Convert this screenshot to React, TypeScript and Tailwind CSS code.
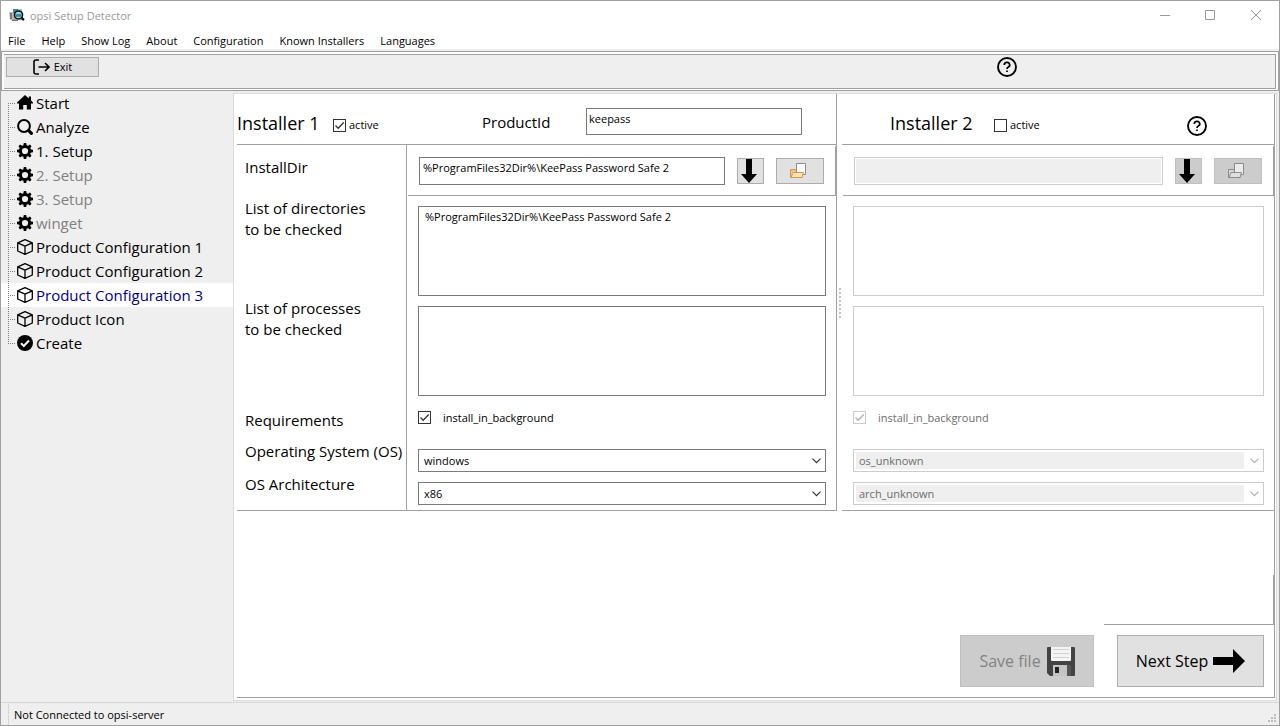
import { useState } from 'react'
import type { ReactNode } from 'react'

const MENU = ['File', 'Help', 'Show Log', 'About', 'Configuration', 'Known Installers', 'Languages']

type IconName = 'home' | 'search' | 'gear' | 'box' | 'check'
interface NavItem { label: string; icon: IconName; muted?: boolean }

const NAV: NavItem[] = [
  { label: 'Start', icon: 'home' },
  { label: 'Analyze', icon: 'search' },
  { label: '1. Setup', icon: 'gear' },
  { label: '2. Setup', icon: 'gear', muted: true },
  { label: '3. Setup', icon: 'gear', muted: true },
  { label: 'winget', icon: 'gear', muted: true },
  { label: 'Product Configuration 1', icon: 'box' },
  { label: 'Product Configuration 2', icon: 'box' },
  { label: 'Product Configuration 3', icon: 'box' },
  { label: 'Product Icon', icon: 'box' },
  { label: 'Create', icon: 'check' },
]

function NavIcon({ name }: { name: IconName }) {
  const cls = 'w-4 h-4 shrink-0'
  if (name === 'home') return <svg className={cls} viewBox="0 0 16 16"><path d="M8 0 0 7.500v1h2v6h4.200V10h3.600v4.500H14v-6h2v-1l-2-2V1.500h-2.200v2z" /></svg>
  if (name === 'search') return <svg className={cls} viewBox="0 0 16 16"><circle cx="7" cy="7" r="5.900" fill="none" stroke="#000" strokeWidth="2" /><path d="m11.700 11.700 2.700 2.700" stroke="#000" strokeWidth="3.200" strokeLinecap="round" /></svg>
  if (name === 'gear') return (
    <svg className={cls} viewBox="0 0 16 16">
      <circle cx="8" cy="8" r="4.600" fill="none" stroke="#000" strokeWidth="3" />
      {[0, 45, 90, 135, 180, 225, 270, 315].map(a => <path key={a} d="M6.300 3 6.800 0h2.400l.5 3z" transform={`rotate(${a} 8 8)`} />)}
    </svg>
  )
  if (name === 'box') return <svg className={cls} viewBox="0 0 16 16" fill="none" stroke="#000" strokeWidth="1.300" strokeLinejoin="round"><path d="M8 .7 15.300 3.800v8.200L8 15.300.7 12V3.800zM.7 3.800 8 7.200l7.300-3.400M8 7.200v8" /></svg>
  return <svg className={cls} viewBox="0 0 16 16"><circle cx="8" cy="8" r="8" /><path d="m4 8.300 2.800 2.700L12 5.500" fill="none" stroke="#efefef" strokeWidth="2.200" /></svg>
}

function HelpButton() {
  return (
    <button aria-label="Help" className="block w-5 h-5 shrink-0">
      <svg viewBox="0 0 20 20" className="w-5 h-5" fill="none" stroke="#000">
        <circle cx="10" cy="10" r="9" strokeWidth="1.900" />
        <path d="M7.300 8a2.700 2.500 0 1 1 4 2.100c-.9.5-1.300.9-1.300 1.900" strokeWidth="1.700" />
        <path d="M10 13.500v1.500" strokeWidth="1.700" />
      </svg>
    </button>
  )
}

function AppLogo() {
  return (
    <svg width="16" height="16" viewBox="0 0 16 16">
      <path d="M0 4h6v8H1z" fill="#b9bcbc" /><path d="M1 5h2v6H1z" fill="#767c7d" />
      <path d="M4 1h9v4H4z" fill="#3d89a8" /><path d="M9 1h4v3H9z" fill="#8ccbd9" />
      <circle cx="9.500" cy="7" r="4" fill="#9fd6d3" stroke="#111" strokeWidth="1.600" />
      <path d="M7 7.500h5" stroke="#2786a8" strokeWidth="2.500" /><path d="m12.500 10 2.500 2" stroke="#111" strokeWidth="2.500" />
      <path d="M3 11.500h6v1.500H3z" fill="#777" />
    </svg>
  )
}

function DownArrow() {
  return <svg width="18" height="24" viewBox="0 0 18 24"><path d="M6 0h6v15h5l-8 9-8-9h5z" /></svg>
}

function FolderIcon({ disabled }: { disabled?: boolean }) {
  const edge = disabled ? '#8c8c8c' : '#dc9548'
  return (
    <svg width="16" height="16" viewBox="0 0 16 16" className="mr-1">
      <path d="M.5 14.500v-8h5l1 1.500H12v6.500z" fill={disabled ? '#d8d8d8' : '#f3c58e'} stroke={edge} />
      <path d="M6.500.5h9v11h-9z" fill={disabled ? '#ececec' : '#fafafa'} stroke="#8b8b8b" />
      <path d="M1 14.500 3 9.500h10.500l-1.500 5z" fill={disabled ? '#e0e0e0' : '#ffe2b8'} stroke={edge} />
    </svg>
  )
}

function FloppyIcon() {
  return (
    <svg width="28" height="29" viewBox="0 0 28 29">
      <path d="M0 1q0-1 1-1h26q1 0 1 1v27q0 1-1 1H3l-3-3z" fill="#434343" />
      <path d="M4 0h20v13q0 1-1 1H5q-1 0-1-1z" fill="#f4f4f4" />
      <path d="M6 2.500h16M6 6.500h16M6 10.500h16" stroke="#d2d2d2" />
      <path d="M6 18h18v11H6z" fill="#555" /><path d="M6 18h14v11H6z" fill="#c4c4c4" />
      <path d="M8 20h4v6H8z" fill="#222" />
    </svg>
  )
}

interface CheckProps { id: string; label: string; defaultChecked?: boolean; disabled?: boolean; wide?: boolean }

function CheckBox({ id, label, defaultChecked, disabled, wide }: CheckProps) {
  const [checked, setChecked] = useState(!!defaultChecked)
  return (
    <div className={`flex items-center ${wide ? 'gap-3' : 'gap-[3px]'}`}>
      <span className="relative flex w-[13px] h-[13px] shrink-0">
        <input id={id} type="checkbox" checked={checked} disabled={disabled} onChange={e => setChecked(e.target.checked)} className="appearance-none w-[13px] h-[13px] bg-white border border-[#333] disabled:border-[#ccc]" />
        {checked && <svg viewBox="0 0 13 13" className="absolute inset-0 pointer-events-none" fill="none" stroke={disabled ? '#b0b0b0' : '#333'} strokeWidth="1.300"><path d="m2.500 6.500 2.700 2.800L10.700 3.500" /></svg>}
      </span>
      <label htmlFor={id} className={`text-[11px] leading-4 ${disabled ? 'text-[#6d6d6d]' : ''}`}>{label}</label>
    </div>
  )
}

function Combo({ label, value, disabled }: { label: string; value: string; disabled?: boolean }) {
  return (
    <div className={`relative h-[23px] border bg-white ${disabled ? 'border-[#ccc]' : 'border-[#7a7a7a]'}`}>
      <select aria-label={label} disabled={disabled} className={`appearance-none block w-full h-[21px] text-[11px] opacity-100 ${disabled ? 'border-2 border-r-[19px] border-white bg-[#efefef] pl-[3px] text-[#6d6d6d]' : 'pl-[5px]'}`}>
        <option>{value}</option>
      </select>
      <svg width="9" height="6" viewBox="0 0 9 6" className="absolute right-1 top-2 pointer-events-none" fill="none" stroke={disabled ? '#b0b0b0' : '#333'} strokeWidth="1.200"><path d="m.5.700 4 4 4-4" /></svg>
    </div>
  )
}

interface FieldsProps { n: number; dir: string; os: string; arch: string; disabled?: boolean }

function InstallerFields({ n, dir, os, arch, disabled }: FieldsProps) {
  const box = disabled ? 'border-[#ccc]' : 'border-[#7a7a7a]'
  const btn = disabled ? 'bg-[#ccc] border-[#bfbfbf]' : 'bg-[#e1e1e1] border-[#adadad]'
  return (
    <div className="flex-1 min-w-0">
      <div className="flex items-center gap-3 h-[50px] mt-px ml-px px-[11px] border-r border-b border-[#a0a0a0]">
        <input aria-label={`InstallDir ${n}`} defaultValue={dir} disabled={disabled} className={`flex-1 min-w-0 h-7 border px-[3px] pb-1.5 text-[11px] ${box} ${disabled ? 'bg-[#efefef] shadow-[inset_0_0_0_1px_white]' : ''}`} />
        <button aria-label="Copy down" disabled={disabled} className={`flex items-center w-[27px] h-[26px] pl-[2px] border ${btn}`}><DownArrow /></button>
        <button aria-label="Browse" disabled={disabled} className={`flex items-center justify-center w-12 h-[26px] border ${btn}`}><FolderIcon disabled={disabled} /></button>
      </div>
      <div className="pl-[11px] pr-[10px] pb-[5px]">
        {['directories', 'processes'].map(kind => (
          <div key={kind} className="h-[100px] pt-[10px]">
            <textarea aria-label={`List of ${kind} ${n}`} disabled={disabled} defaultValue={kind === 'directories' ? dir : ''} className={`block w-full h-[90px] resize-none border bg-white px-[6px] py-[2px] text-[11px] leading-4 ${box}`} />
          </div>
        ))}
        <div className="flex items-center h-[43px]">
          <CheckBox id={`background-${n}`} label="install_in_background" defaultChecked disabled={disabled} wide />
        </div>
        <div className="h-[33px] pt-[10px]"><Combo label={`Operating System ${n}`} value={os} disabled={disabled} /></div>
        <div className="h-[33px] pt-[10px]"><Combo label={`OS Architecture ${n}`} value={arch} disabled={disabled} /></div>
      </div>
    </div>
  )
}

function RowLabel({ className, children }: { className: string; children: ReactNode }) {
  return <div className={`pl-2 text-[15px] leading-[21px] whitespace-nowrap ${className}`}>{children}</div>
}

export default function App() {
  const [active, setActive] = useState('Product Configuration 3')

  return (
    <div className="flex flex-col min-h-screen border border-[#a0a0a0] bg-[#efefef] text-black font-['Open_Sans',sans-serif] text-[11px] leading-4">
      <header className="bg-white">
        <div className="flex items-center h-[30px] pl-2 pr-4 text-[#999]">
          <AppLogo />
          <span className="ml-[5px] flex-1">opsi Setup Detector</span>
          <div className="flex gap-[34px]">
            <button aria-label="Minimize"><svg width="12" height="12" viewBox="0 0 12 12" stroke="#999"><path d="M1 5.500h10" /></svg></button>
            <button aria-label="Maximize"><svg width="12" height="12" viewBox="0 0 12 12" stroke="#999" fill="none"><path d="M.5.5h9v9h-9z" /></svg></button>
            <button aria-label="Close"><svg width="12" height="12" viewBox="0 0 12 12" stroke="#999"><path d="m0 0 10 10M10 0 0 10" /></svg></button>
          </div>
        </div>
        <nav className="flex items-end gap-4 h-[18px] pl-[7px]">
          {MENU.map(m => <button key={m}>{m}</button>)}
        </nav>
      </header>

      <div className="mt-[2px] h-10 border border-[#a0a0a0] bg-white p-[2px]">
        <div className="flex items-start h-[35px] border border-l-0 border-[#a0a0a0] bg-[#efefef] pt-[2px] pl-[2px]">
          <button className="flex items-center justify-center gap-1 w-[93px] h-5 border border-[#adadad] bg-[#e1e1e1]">
            <svg width="17" height="16" viewBox="0 0 17 16" fill="none" stroke="#000" strokeWidth="1.600"><path d="M6 1H3Q1 1 1 3v10q0 2 2 2h3M5.500 8H16M12 4l4 4-4 4" /></svg>
            Exit
          </button>
          <div className="flex-1" />
          <div className="pr-[258px]"><HelpButton /></div>
        </div>
      </div>

      <main className="flex flex-1">
        <nav className="w-[232px] shrink-0">
          {NAV.map((item, i) => (
            <button key={item.label} onClick={() => setActive(item.label)} className={`flex items-center w-full h-6 pl-[7px] text-[15px] ${active === item.label ? 'bg-white text-[#000080]' : item.muted ? 'text-[#808080]' : ''}`}>
              <svg width="9" height="24" viewBox="0 0 9 24" className="shrink-0" stroke="#808080" strokeDasharray="1 1">
                <path d={i === 0 ? 'M.5 12v12' : i === NAV.length - 1 ? 'M.5 0v12' : 'M.5 0v24'} /><path d="M0 12.500h7" />
              </svg>
              <NavIcon name={item.icon} />
              <span className="pl-[3px] whitespace-nowrap">{item.label}</span>
            </button>
          ))}
        </nav>

        <div className="flex flex-1 min-w-0 mt-[2px] mr-[2px] mb-px border border-[#dcdcdc] bg-white pl-[3px] pr-px pb-[2px]">
          <div className="flex flex-col flex-1 min-w-0 border-r border-b border-[#a0a0a0]">
            <div className="grid grid-cols-[minmax(0,600fr)_5px_minmax(0,432fr)]">
              <section className="border-r border-b border-[#a0a0a0]">
                <div className="flex items-center h-[51px] pt-1 pr-[34px] border-b border-[#a0a0a0]">
                  <h2 className="w-24 pt-1 text-lg whitespace-nowrap">Installer 1</h2>
                  <div className="flex-1 pt-2"><CheckBox id="active-1" label="active" defaultChecked /></div>
                  <label htmlFor="product-id" className="w-[104px] pt-[2px] text-[15px]">ProductId</label>
                  <input id="product-id" defaultValue="keepass" className="w-[216px] h-[27px] border border-[#7a7a7a] px-[2px] pb-1.5 text-[11px]" />
                </div>
                <div className="flex">
                  <div className="w-[170px] shrink-0 border-r border-[#a0a0a0]">
                    <RowLabel className="h-[51px] pt-3">InstallDir</RowLabel>
                    <RowLabel className="h-[100px] pt-[2px]">List of directories<br />to be checked</RowLabel>
                    <RowLabel className="h-[100px] pt-[2px]">List of processes<br />to be checked</RowLabel>
                    <RowLabel className="h-[43px] pt-[14px]">Requirements</RowLabel>
                    <RowLabel className="h-[33px] pt-[2px]">Operating System (OS)</RowLabel>
                    <RowLabel className="h-[33px] pt-[2px]">OS Architecture</RowLabel>
                  </div>
                  <InstallerFields n={1} dir="%ProgramFiles32Dir%\KeePass Password Safe 2" os="windows" arch="x86" />
                </div>
              </section>

              <div className="flex items-center justify-center">
                <svg width="3" height="30" viewBox="0 0 3 30" stroke="#c0c0c0" strokeWidth="2" strokeDasharray="2 2"><path d="M2 0v30" /></svg>
              </div>

              <section className="border-b border-[#a0a0a0]">
                <div className="flex items-center h-[51px] pt-1 pl-12 pr-[67px] border-b border-[#a0a0a0]">
                  <h2 className="w-[104px] pt-1 text-lg whitespace-nowrap">Installer 2</h2>
                  <div className="flex-1 pt-2"><CheckBox id="active-2" label="active" /></div>
                  <div className="pt-[10px]"><HelpButton /></div>
                </div>
                <InstallerFields n={2} dir="" os="os_unknown" arch="arch_unknown" disabled />
              </section>
            </div>

            <div className="flex flex-col flex-1 items-end justify-end">
              <div className="w-[170px] h-[50px] border-r border-b border-[#a0a0a0]" />
              <div className="flex gap-[23px] p-[10px]">
                <button disabled className="flex items-center justify-center gap-[6px] w-[134px] h-[52px] border border-[#bfbfbf] bg-[#ccc] text-[#838383] text-base">Save file <FloppyIcon /></button>
                <button className="flex items-center justify-center gap-[5px] w-[147px] h-[52px] border border-[#adadad] bg-[#e1e1e1] text-base">
                  Next Step
                  <svg width="32" height="24" viewBox="0 0 32 24"><path d="M0 8h20V0l12 12-12 12v-8H0z" /></svg>
                </button>
              </div>
            </div>
          </div>
        </div>
      </main>

      <footer className="relative flex h-[23px] pt-px pl-[7px] border-t border-[#d7d7d7]">
        <div className="flex items-center pl-[5px] border-l border-[#d7d7d7]">Not Connected to opsi-server</div>
        <svg width="9" height="9" viewBox="0 0 9 9" className="absolute right-[2px] bottom-[2px]" fill="#bfbfbf"><path d="M6 0h2v2H6zM3 3h2v2H3zM6 3h2v2H6zM0 6h2v2H0zM3 6h2v2H3zM6 6h2v2H6z" /></svg>
      </footer>
    </div>
  )
}
